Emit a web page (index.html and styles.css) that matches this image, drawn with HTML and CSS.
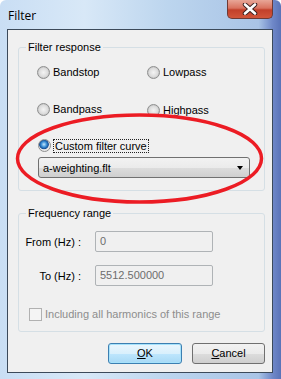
FILE: index.html
```html
<!DOCTYPE html>
<html lang="en">

<head>
    <meta charset="UTF-8">
    <title>Filter</title>
    <link rel="stylesheet" href="styles.css">
</head>

<body>
    <div class="window">
        <div class="titlebar">
            <span class="title">Filter</span>
            <div class="close-btn">
                <svg width="18" height="12" viewBox="0 0 18 12">
                    <path d="M4 1.5 L14 10.5 M14 1.5 L4 10.5" stroke="#3a1f1f" stroke-width="4.5" stroke-linecap="round" />
                    <path d="M4 1.5 L14 10.5 M14 1.5 L4 10.5" stroke="#ffffff" stroke-width="2.6" stroke-linecap="round" />
                </svg>
            </div>
        </div>

        <div class="client">
            <div class="group group-response">
                <span class="group-title">Filter response</span>
                <div class="radio-grid">
                    <label class="radio-item"><span class="radio"></span>Bandstop</label>
                    <label class="radio-item"><span class="radio"></span>Lowpass</label>
                    <label class="radio-item"><span class="radio"></span>Bandpass</label>
                    <label class="radio-item shift"><span class="radio"></span>Highpass</label>
                </div>
                <label class="radio-item custom"><span class="radio checked"></span><span class="focus">Custom filter curve</span></label>
                <div class="dropdown">
                    <span>a-weighting.flt</span>
                    <span class="arrow"></span>
                </div>
            </div>

            <div class="group group-range">
                <span class="group-title">Frequency range</span>
                <div class="range-grid">
                    <span class="field-label">From (Hz) :</span>
                    <div class="field">0</div>
                    <span class="field-label">To (Hz) :</span>
                    <div class="field">5512.500000</div>
                </div>
                <label class="check-item"><span class="checkbox"></span>Including all harmonics of this range</label>
            </div>

            <div class="buttons">
                <div class="btn btn-default"><u>O</u>K</div>
                <div class="btn"><u>C</u>ancel</div>
            </div>
        </div>

        <svg class="annotation" width="281" height="379" viewBox="0 0 281 379">
            <ellipse cx="139.5" cy="158.5" rx="122" ry="43.5" fill="none" stroke="#ec1c24" stroke-width="3.5" />
        </svg>
    </div>
</body>

</html>
```

FILE: styles.css
```css
body {
    margin: 0;
    background-color: #ffffff;
    font-family: "Liberation Sans", Arial, sans-serif;
    font-size: 11px;
    color: #000000;
}

.window {
    position: relative;
    width: 281px;
    height: 379px;
    box-sizing: border-box;
    padding: 0 8px 6px 7px;
    border-radius: 6px 6px 0 0;
    background: linear-gradient(to right, #c9def4 0%, #d8e8f7 30%, #bcd5ee 60%, #a9c4e6 92%, #6f88c8 97%, #5a73b8 100%);
    overflow: hidden;
}

.titlebar {
    display: flex;
    align-items: flex-start;
    height: 29px;
}

.title {
    margin-top: 7px;
    padding-left: 1px;
    font-family: "Open Sans", "DejaVu Sans", sans-serif;
    font-size: 12px;
    color: #000000;
}

.close-btn {
    margin-left: auto;
    width: 46px;
    height: 19px;
    box-sizing: border-box;
    border: 1px solid #6e3a35;
    border-top: none;
    border-radius: 0 0 5px 5px;
    background: linear-gradient(to bottom, #e8a697 0%, #d9725f 45%, #c2402a 55%, #d1553a 100%);
    display: flex;
    justify-content: center;
    align-items: center;
}

.client {
    height: 344px;
    box-sizing: border-box;
    border: 1px solid #3c4a5a;
    background-color: #f0f0f0;
    padding-top: 17px;
}

.group {
    position: relative;
    width: 247px;
    margin-left: 10px;
    box-sizing: border-box;
    border: 1px solid #d5dfe5;
    border-radius: 3px;
}

.group-title {
    position: absolute;
    top: -7px;
    left: 7px;
    padding: 0 2px;
    line-height: 13px;
    background-color: #f0f0f0;
}

.group-response {
    height: 144px;
    padding: 18px 0 0 18px;
}

.radio-grid {
    display: grid;
    grid-template-columns: 110px auto;
    row-gap: 24px;
}

.radio-item {
    display: flex;
    align-items: center;
    height: 13px;
    line-height: 13px;
}

.radio-item.shift {
    margin-top: 1px;
}

.radio {
    width: 13px;
    height: 13px;
    box-sizing: border-box;
    margin-right: 3px;
    border: 1px solid #8e8f8f;
    border-radius: 50%;
    background: radial-gradient(circle at 50% 50%, #f4f4f4 0%, #dcdcdc 55%, #c8c8c8 70%, #f7f7f7 100%);
    flex-shrink: 0;
}

.radio.checked {
    background: radial-gradient(circle at 45% 40%, #c5e8ff 0%, #3a8fd6 30%, #154f96 50%, #e4e4e4 58%, #f7f7f7 100%);
}

.custom {
    margin-top: 22px;
    margin-left: 1px;
}

.focus {
    padding: 0 1px;
    margin-left: -1px;
    border: 1px dotted #222222;
    line-height: 12px;
}

.dropdown {
    display: flex;
    align-items: center;
    width: 212px;
    height: 21px;
    box-sizing: border-box;
    margin-top: 5px;
    margin-left: 1px;
    padding: 0 6px 0 4px;
    border: 1px solid #707070;
    border-radius: 3px;
    background: linear-gradient(to bottom, #f2f2f2 0%, #ebebeb 50%, #dddddd 51%, #cfcfcf 100%);
}

.dropdown .arrow {
    margin-left: auto;
    width: 0;
    height: 0;
    border-left: 3.5px solid transparent;
    border-right: 3.5px solid transparent;
    border-top: 4px solid #000000;
}

.group-range {
    height: 119px;
    margin-top: 22px;
    padding-top: 17px;
}

.range-grid {
    display: grid;
    grid-template-columns: 62px 118px;
    column-gap: 14px;
    row-gap: 13px;
    align-items: center;
}

.field-label {
    text-align: right;
}

.field {
    height: 21px;
    box-sizing: border-box;
    padding-left: 4px;
    border: 1px solid #afb3b6;
    border-radius: 2px;
    background-color: #f0f0f0;
    color: #6d6d6d;
    line-height: 18px;
}

.check-item {
    display: flex;
    align-items: center;
    margin: 22px 0 0 10px;
    color: #8d8d8d;
    line-height: 13px;
}

.checkbox {
    width: 13px;
    height: 13px;
    box-sizing: border-box;
    margin-right: 3px;
    border: 1px solid #b1b1b1;
    background-color: #f4f4f4;
}

.buttons {
    display: flex;
    gap: 10px;
    margin: 11px 0 0 100px;
}

.btn {
    width: 73px;
    height: 21px;
    box-sizing: border-box;
    border: 1px solid #707070;
    border-radius: 3px;
    background: linear-gradient(to bottom, #f2f2f2 0%, #ebebeb 50%, #dddddd 51%, #cfcfcf 100%);
    text-align: center;
    line-height: 19px;
}

.btn-default {
    width: 74px;
    border-color: #3c7fb1;
    box-shadow: inset 0 0 0 1px #a6e2fb;
    background: linear-gradient(to bottom, #eaf6fd 0%, #d9f0fc 50%, #bee6fd 51%, #a7d9f5 100%);
}

.annotation {
    position: absolute;
    top: 0;
    left: 0;
    pointer-events: none;
}
```
